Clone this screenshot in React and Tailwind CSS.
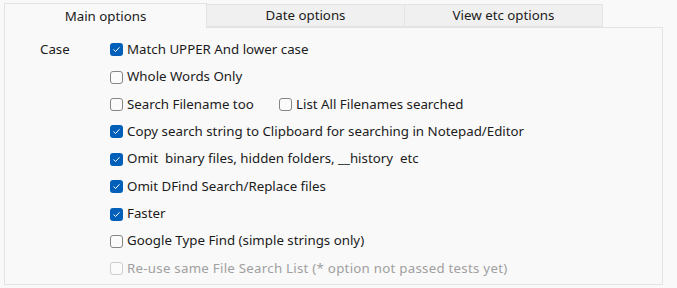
import React from "react";

const font = { fontFamily: '"Noto Sans", "Open Sans", sans-serif' };

function Box({ checked, disabled }) {
  if (checked) {
    return (
      <span className="flex h-[13px] w-[13px] shrink-0 items-center justify-center rounded-[3px] bg-[#005fb8]">
        <svg width="9" height="9" viewBox="0 0 9 9">
          <path d="M1.8 4.8 L3.6 6.5 L7.2 2.6" fill="none" stroke="#ffffff" strokeWidth="1" strokeLinecap="round" strokeLinejoin="round" />
        </svg>
      </span>
    );
  }
  return (
    <span
      className={`h-[13px] w-[13px] shrink-0 rounded-[3px] border bg-[#fbfbfb] ${
        disabled ? "border-[#cdcdcd]" : "border-[#858585]"
      }`}
    />
  );
}

function Check({ label, checked, disabled }) {
  return (
    <label className="flex items-center gap-[4px]">
      <Box checked={checked} disabled={disabled} />
      <span className={`whitespace-pre ${disabled ? "text-[#a0a0a0] tracking-[0.25px]" : "text-[#1b1b1b]"}`}>{label}</span>
    </label>
  );
}

function Tab({ label, active }) {
  if (active) {
    return (
      <div className="relative z-10 -mb-px flex h-[25px] w-[203px] items-center justify-center border border-b-0 border-[#e3e3e3] bg-[#f9f9f9] pt-[1px] text-[#1b1b1b]">
        {label}
      </div>
    );
  }
  return (
    <div className="-ml-px flex h-[23px] w-[199px] items-center justify-center border border-[#e3e3e3] bg-[#f0f0f0] text-[#1b1b1b]">
      {label}
    </div>
  );
}

export default function App() {
  const rows = [
    { label: "Match UPPER And lower case", checked: true },
    { label: "Whole Words Only" },
    null,
    { label: "Copy search string to Clipboard for searching in Notepad/Editor", checked: true },
    { label: "Omit  binary files, hidden folders, __history  etc", checked: true },
    { label: "Omit DFind Search/Replace files", checked: true },
    { label: "Faster", checked: true },
    { label: "Google Type Find (simple strings only)" },
    { label: "Re-use same File Search List (* option not passed tests yet)", disabled: true },
  ];

  return (
    <div className="h-[288px] w-[677px] bg-[#f9f9f9] pl-[4px] pt-[3px] text-[13.3px]" style={font}>
      <div className="flex items-end">
        <Tab label="Main options" active />
        <Tab label="Date options" />
        <Tab label="View etc options" />
      </div>
      <div className="h-[258px] w-[659px] border border-[#e3e3e3] bg-[#f9f9f9] pt-[8px]">
        {rows.map((row, i) => (
          <div key={i} className="flex h-[27.4px] items-center">
            <div className="w-[70px] pl-[35px] text-[#1b1b1b]">{i === 0 ? "Case" : ""}</div>
            <div className="w-[35px]" />
            {row ? (
              <Check {...row} />
            ) : (
              <div className="flex items-center">
                <div className="w-[169px]">
                  <Check label="Search Filename too" />
                </div>
                <Check label="List All Filenames searched" />
              </div>
            )}
          </div>
        ))}
      </div>
    </div>
  );
}
